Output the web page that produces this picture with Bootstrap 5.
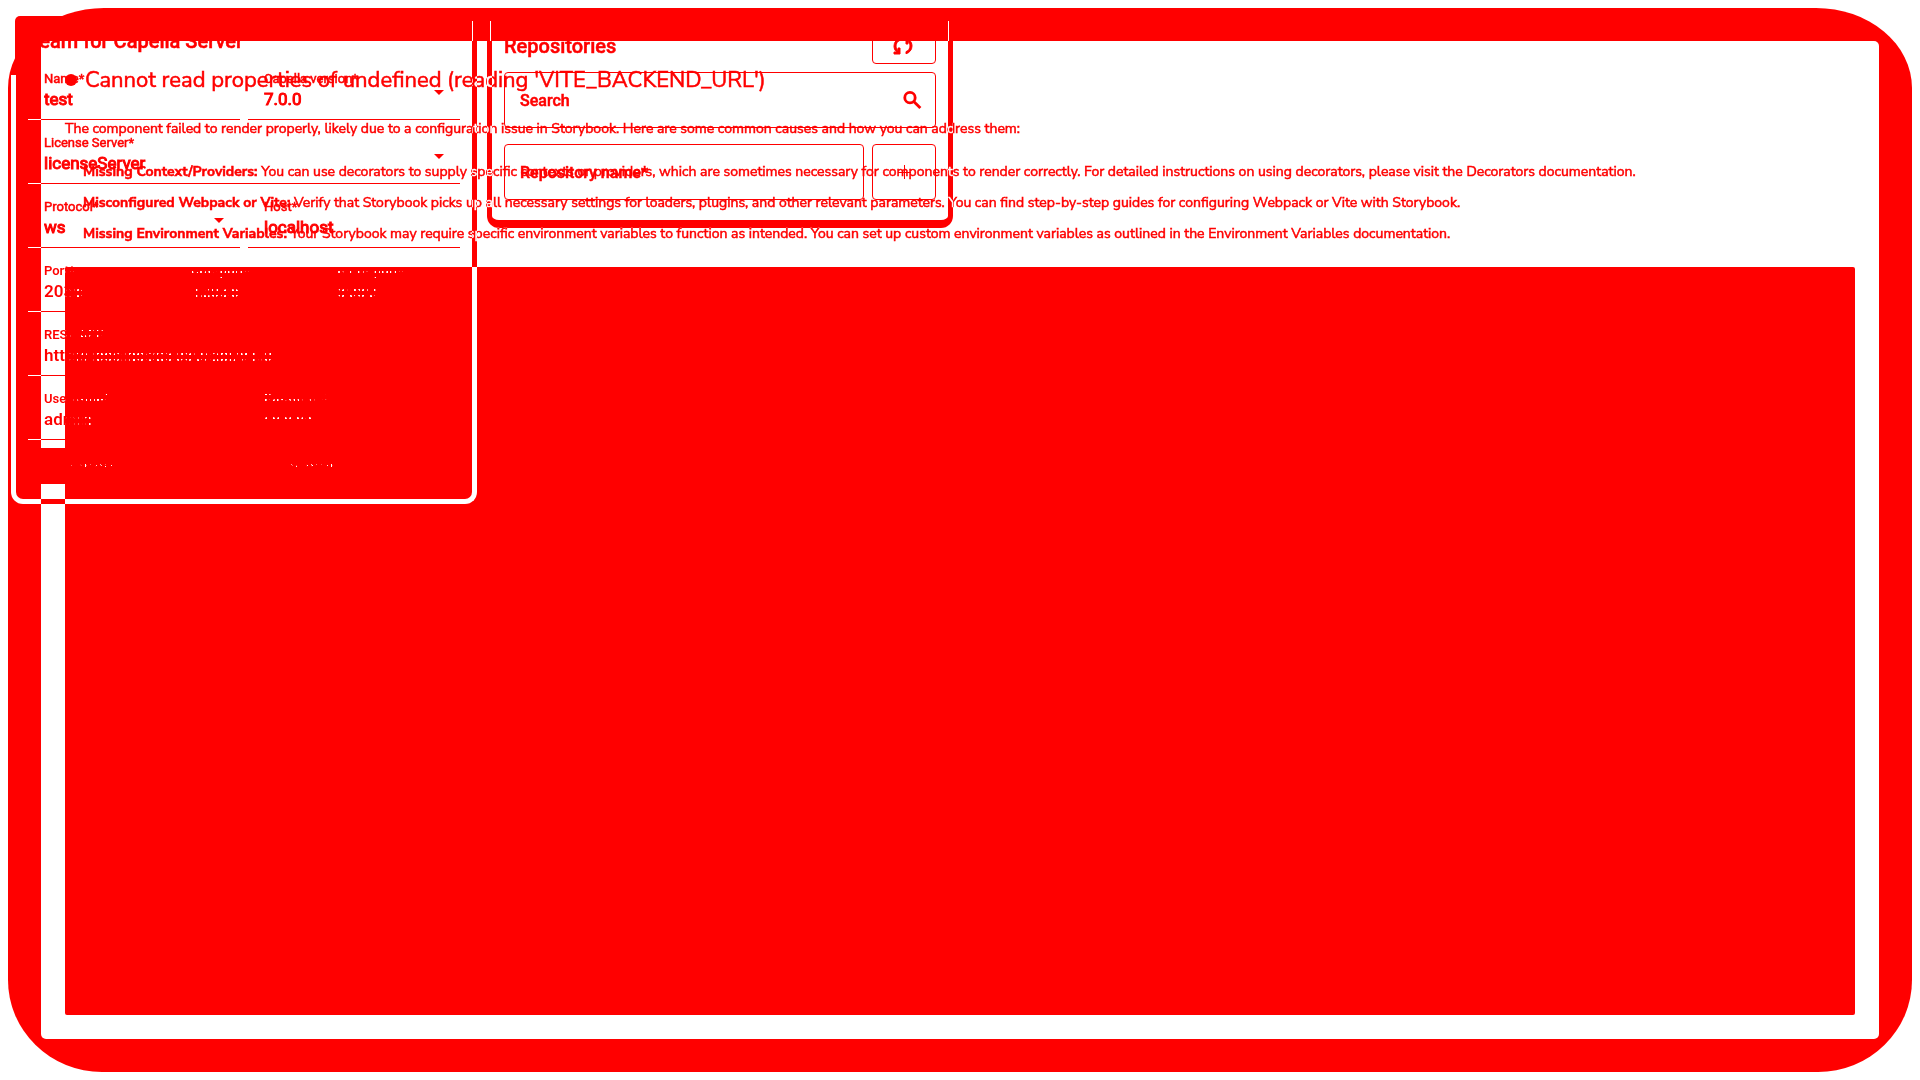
<!DOCTYPE html>
<html lang="en">
<head>
<meta charset="utf-8">
<meta name="viewport" content="width=device-width, initial-scale=1">
<title>Model sources</title>
<link href="https://cdn.jsdelivr.net/npm/bootstrap@5.3.0/dist/css/bootstrap.min.css" rel="stylesheet">
<style>
:root { --ink: #f00; }
body { background: #fff; color: var(--ink); font-family: Roboto, "Liberation Sans", sans-serif; font-size: 16px; -webkit-text-stroke: .5px var(--ink); }
.frame { min-height: calc(100vh - 16px); margin: 8px; padding: 33px; background: var(--ink); border-radius: 96px 96px 94px 94px / 80px 80px 92px 92px; position: relative; }
/* left form's solid side, which squares off the frame corner */
.frame::before { content: ""; position: absolute; left: 7px; top: 8px; width: 100px; height: 100px; background: var(--ink); border-radius: 5px; }
.error-panel { position: relative; background: #fff; border-radius: 5px; padding: 24px; font-family: "Nunito Sans", Nunito, "Noto Sans", sans-serif; font-size: 14px; line-height: 20px; }
.error-title { font-size: 22px; line-height: 30px; margin: 0 0 24px; gap: 8px; }
.bullet { width: 12px; height: 12px; border-radius: 50%; background: var(--ink); }
.causes { padding-left: 18px; gap: 11px; margin: 23px 0 23px; }
.causes a, .causes a:hover { color: inherit; text-decoration: none; }
.trace { background: var(--ink); border-radius: 2px; }

.overlay { position: absolute; top: 16px; left: 16px; gap: 20px; }
.tool { position: relative; width: 456px; }
.tool-title { font-size: 20px; line-height: 26px; font-weight: 500; margin: 0; }
.outline { position: absolute; top: 25px; left: -5px; right: -5px; bottom: -5px; border: 5px solid #0ff; border-top: 0; border-radius: 0 0 12px 12px; mix-blend-mode: difference; pointer-events: none; }
.outline::before, .outline::after { content: ""; position: absolute; bottom: 100%; width: 1px; height: 20px; background: #0ff; }
.outline::before { left: -2px; }
.outline::after { right: -1px; }
.tool-a .outline { clip-path: polygon(12px -20px, 100% -20px, 100% 100%, 0 100%, 0 34px, 12px 34px); }
.tool-a .outline::before { display: none; }
.tool-a { padding: 12px 12px 15px; }
.tool-a .tool-title { margin-bottom: 10px; }
.tool-b { padding: 12px 12px 20px; }
.tool-b .outline { border-bottom-width: 8px; bottom: -8px; }
.rows { gap: 8px; }
.entry { flex: 1 1 0; min-width: 0; height: 56px; padding: 7px 16px 0; position: relative; border-bottom: 1px solid var(--ink); }
.edge { border-bottom-color: transparent; background: linear-gradient(90deg, #fff 13px, var(--ink) 13px) 0 100% / 100% 1px no-repeat border-box; }
.entry label { display: block; font-size: 13px; line-height: 16px; }
.entry input, .entry select { display: block; width: 100%; border: 0; padding: 0; margin-top: 2px; background: transparent; color: var(--ink); font-size: 17px; line-height: 20px; height: 20px; appearance: none; outline: 0; -webkit-text-stroke: 1px var(--ink); }
/* glyphs that lie over the trace show only as scattered pale specks */
.speck label, .speck input { color: transparent; -webkit-text-stroke: 0; background-clip: text; -webkit-background-clip: text; background-image: linear-gradient(var(--ink), var(--ink)), radial-gradient(#fff 0 1px, transparent 1px); background-size: var(--solid, 1px) 100%, 4px 6px; background-repeat: no-repeat, repeat; }
.speck label, .speck input { font-weight: 600; }
.speck.edge { --solid: 31px; }
.caret { position: absolute; right: 16px; bottom: 24px; border: 5px solid transparent; border-top-color: var(--ink); border-bottom: 0; pointer-events: none; }
.actions { gap: 8px; margin-top: 8px; }
.actions button { flex: 1 1 0; height: 36px; border: 0; font-size: 14px; -webkit-text-stroke: 0; color: transparent; background: radial-gradient(#fff 0 1px, transparent 1px) 0 0 / 5px 7px, linear-gradient(var(--ink), var(--ink)); -webkit-background-clip: text, border-box; background-clip: text, border-box; }
.actions .cancel { flex: 0 0 128px; }
.boxed { border: 1px solid var(--ink); border-radius: 4px; background: transparent; height: 56px; color: var(--ink); }
.boxed input { border: 0; outline: 0; background: transparent; color: var(--ink); font-weight: 500; padding: 2px 0 0; width: 100%; }
.boxed input::placeholder { color: var(--ink); opacity: 1; }
.icon-btn { width: 64px; padding: 0; }
.boxed.sync { height: 36px; }
.find { padding: 0 11px 0 15px; margin: 8px 0 16px; }
.repo-name { padding: 0 15px; }
</style>
</head>
<body>
<main class="frame d-flex flex-column">
  <section class="error-panel d-flex flex-column flex-grow-1">
    <h1 class="error-title d-flex align-items-center fw-normal"><span class="bullet"></span>Cannot read properties of undefined (reading 'VITE_BACKEND_URL')</h1>
    <p class="m-0">The component failed to render properly, likely due to a configuration issue in Storybook. Here are some common causes and how you can address them:</p>
    <ul class="causes list-unstyled d-flex flex-column">
      <li><strong>Missing Context/Providers:</strong> You can use decorators to supply specific contexts or providers, which are sometimes necessary for components to render correctly. For detailed instructions on using decorators, please visit the <a href="#">Decorators documentation</a>.</li>
      <li><strong>Misconfigured Webpack or Vite:</strong> Verify that Storybook picks up all necessary settings for loaders, plugins, and other relevant parameters. You can find step-by-step guides for configuring <a href="#">Webpack</a> or <a href="#">Vite</a> with Storybook.</li>
      <li><strong>Missing Environment Variables:</strong> Your Storybook may require specific environment variables to function as intended. You can set up custom environment variables as outlined in the <a href="#">Environment Variables documentation</a>.</li>
    </ul>
    <div class="trace flex-grow-1"></div>
  </section>
</main>

<div class="overlay d-flex align-items-start">
  <form class="tool tool-a">
    <h2 class="tool-title">Team for Capella Server</h2>
    <div class="rows d-flex flex-column">
      <div class="rows d-flex">
        <div class="entry edge"><label for="name">Name*</label><input id="name" value="test"></div>
        <div class="entry"><label for="version">Capella version*</label><select id="version"><option>7.0.0</option></select><span class="caret"></span></div>
      </div>
      <div class="rows d-flex">
        <div class="entry edge"><label for="lic">License Server*</label><select id="lic"><option>licenseServer</option></select><span class="caret"></span></div>
      </div>
      <div class="rows d-flex">
        <div class="entry edge"><label for="proto">Protocol*</label><select id="proto"><option>ws</option></select><span class="caret"></span></div>
        <div class="entry"><label for="host">Host*</label><input id="host" value="localhost"></div>
      </div>
      <div class="rows d-flex">
        <div class="entry edge speck"><label for="port">Port*</label><input id="port" value="2036"></div>
        <div class="entry speck"><label for="cdo">CDO port*</label><input id="cdo" value="12036"></div>
        <div class="entry speck"><label for="http">HTTP port*</label><input id="http" value="8080"></div>
      </div>
      <div class="rows d-flex">
        <div class="entry edge speck"><label for="rest">REST API*</label><input id="rest" value="http://localhost:8080/api/v1.0"></div>
      </div>
      <div class="rows d-flex">
        <div class="entry edge speck"><label for="user">Username*</label><input id="user" value="admin"></div>
        <div class="entry speck"><label for="pass">Password*</label><input id="pass" type="password" value="password"></div>
      </div>
    </div>
    <div class="actions d-flex">
      <button type="button" class="cancel">Cancel</button>
      <button type="button">Submit</button>
    </div>
    <span class="outline"></span>
  </form>

  <section class="tool tool-b">
    <div class="d-flex justify-content-between align-items-center">
      <h2 class="tool-title">Repositories</h2>
      <button type="button" class="boxed icon-btn sync" aria-label="Refresh"><svg width="24" height="24" viewBox="0 0 24 24" fill="currentColor"><path d="M4 12.050q0 1.125.425 2.188T5.750 16.200l.250.250V14h2v6H2v-2h2.750l-.4-.350q-1.300-1.150-1.825-2.625T2 12.050q0-2.775 1.663-4.938T8 4.250v2.100Q6.200 7 5.100 8.563T4 12.050zM14 19.750v-2.100q1.800-.650 2.900-2.212T18 11.950q0-1.125-.425-2.187T16.250 7.800L16 7.550V10h-2V4h6v2h-2.750l.4.350q1.225 1.225 1.788 2.663T20 11.950q0 2.775-1.662 4.938T14 19.750z" stroke="currentColor"/></svg></button>
    </div>
    <div class="boxed find d-flex align-items-center"><input aria-label="Search" placeholder="Search"><svg width="24" height="24" viewBox="0 0 24 24" fill="none" stroke="currentColor" stroke-width="3"><circle cx="9.500" cy="9.500" r="5.500"/><path d="m13.500 13.500 7 7"/></svg></div>
    <div class="rows d-flex">
      <div class="boxed repo-name d-flex align-items-center flex-grow-1"><input aria-label="Repository name" placeholder="Repository name*"></div>
      <button type="button" class="boxed icon-btn" aria-label="Add repository"><svg width="24" height="24" viewBox="0 0 24 24" fill="none" stroke="currentColor" stroke-width="1"><path d="M12.500 5v14M6 12.500h13"/></svg></button>
    </div>
    <span class="outline"></span>
  </section>
</div>
<script src="https://cdn.jsdelivr.net/npm/bootstrap@5.3.0/dist/js/bootstrap.bundle.min.js"></script>
</body>
</html>
